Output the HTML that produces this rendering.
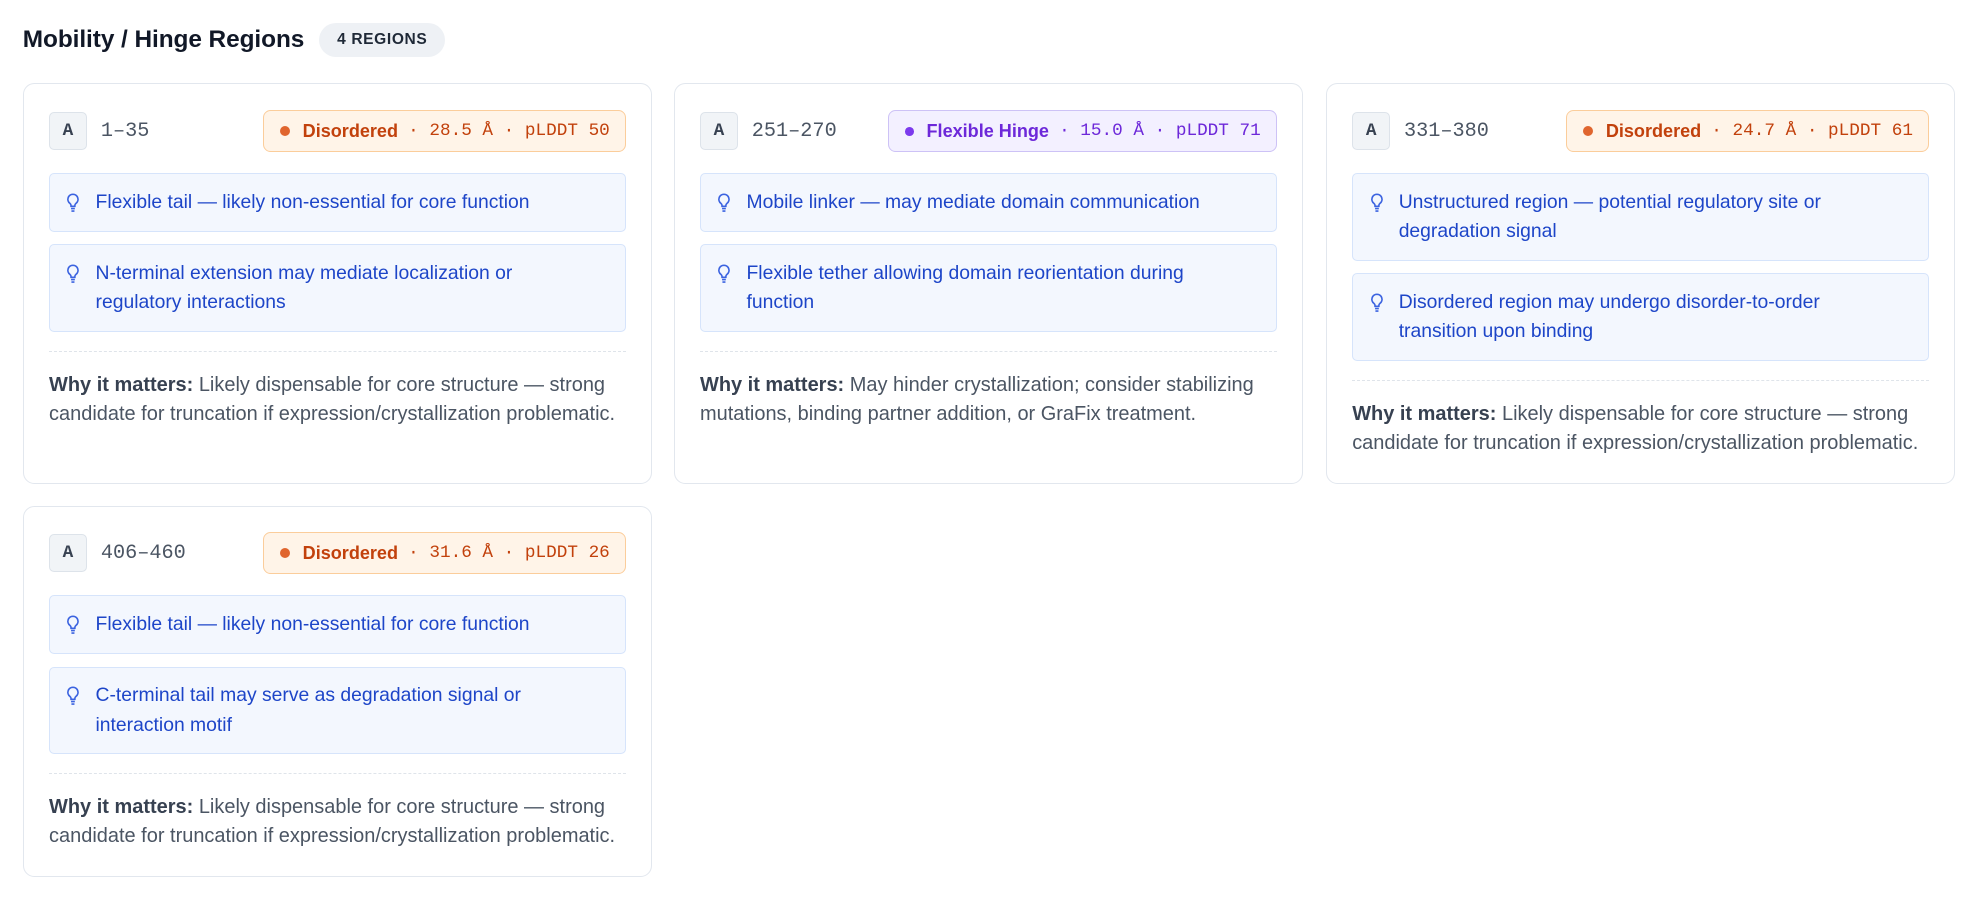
<!DOCTYPE html>
<html><head><meta charset="utf-8"><style>
html,body{margin:0;padding:0;background:#fff;}
body{width:1568px;height:714px;zoom:1.264;overflow:hidden;font-family:"Liberation Sans",sans-serif;}
.hdr{position:absolute;left:18px;top:18px;height:27px;display:flex;align-items:center;}
.hdr h1{margin:0;font-size:19.3px;font-weight:bold;color:#111827;letter-spacing:-0.05px;}
.cnt{margin-left:12px;background:#eef1f5;border-radius:14px;height:27px;line-height:27px;padding:0 14px;font-size:12.3px;font-weight:bold;color:#1f2937;letter-spacing:0.5px;}
.card{position:absolute;width:498px;border:1px solid #e2e7ee;border-radius:9px;background:#fff;box-sizing:border-box;padding:20px 20px 0 20px;}
.top{display:flex;align-items:center;height:34px;margin-bottom:16px;}
.chip{width:30px;height:30px;box-sizing:border-box;border:1px solid #dde3ea;background:#f1f4f7;border-radius:4px;font-family:"Liberation Mono",monospace;font-weight:bold;font-size:14px;color:#374151;display:flex;align-items:center;justify-content:center;}
.rng{margin-left:11px;font-family:"Liberation Mono",monospace;font-size:16px;color:#4b5563;}
.badge{margin-left:auto;height:33px;box-sizing:border-box;border-radius:6px;display:flex;align-items:center;padding:0 12px 0 13px;font-size:14.3px;}
.badge b{font-weight:bold;}
.badge .m{font-family:"Liberation Mono",monospace;font-size:14px;margin-left:8px;white-space:pre;}
.dot{width:8px;height:8px;border-radius:50%;margin-right:10px;}
.or{background:#fff4e8;border:1px solid #fbcd9b;color:#c2410c;}
.or .dot{background:#e0652e;}
.pu{background:#f3f0ff;border:1px solid #cdc2f6;color:#6d28d9;}
.pu .dot{background:#7c3aed;width:7px;height:7px;}
.hint{border:1px solid #d6e4fb;background:#f3f7fe;border-radius:4px;padding:11px 30px 11px 36px;position:relative;font-size:15.3px;line-height:23px;color:#1d45c8;margin-bottom:10px;}
.hint svg{position:absolute;left:13px;top:15px;}
.dash{border-top:1px dashed #dfe4ea;margin-top:15px;}
.why{padding-top:15px;font-size:15.8px;line-height:23px;color:#4b5563;}
.why b{color:#374151;}
</style></head><body>
<div class="hdr"><h1>Mobility / Hinge Regions</h1><span class="cnt">4 REGIONS</span></div>

<div class="card" style="left:18px;top:66px;height:317px;">
<div class="top"><div class="chip">A</div><div class="rng">1–35</div><div class="badge or"><span class="dot"></span><b>Disordered</b><span class="m">· 28.5 Å · pLDDT 50</span></div></div>
<div class="hint"><svg width="11" height="16" viewBox="0 0 11 16" fill="none" stroke="#3b63e0" stroke-width="1.3"><path d="M5.5 1a4 4 0 0 0-2.4 7.2c.6.5.9 1.1.9 1.8v.5h3v-.5c0-.7.3-1.3.9-1.8A4 4 0 0 0 5.5 1z"/><path d="M4 12.3h3M4.3 14.3h2.4"/></svg>Flexible tail — likely non-essential for core function</div>
<div class="hint"><svg width="11" height="16" viewBox="0 0 11 16" fill="none" stroke="#3b63e0" stroke-width="1.3"><path d="M5.5 1a4 4 0 0 0-2.4 7.2c.6.5.9 1.1.9 1.8v.5h3v-.5c0-.7.3-1.3.9-1.8A4 4 0 0 0 5.5 1z"/><path d="M4 12.3h3M4.3 14.3h2.4"/></svg>N-terminal extension may mediate localization or regulatory interactions</div>
<div class="dash"></div>
<div class="why"><b>Why it matters:</b> Likely dispensable for core structure — strong candidate for truncation if expression/crystallization problematic.</div>
</div>

<div class="card" style="left:533px;top:66px;height:317px;">
<div class="top"><div class="chip">A</div><div class="rng">251–270</div><div class="badge pu"><span class="dot"></span><b>Flexible Hinge</b><span class="m">· 15.0 Å · pLDDT 71</span></div></div>
<div class="hint"><svg width="11" height="16" viewBox="0 0 11 16" fill="none" stroke="#3b63e0" stroke-width="1.3"><path d="M5.5 1a4 4 0 0 0-2.4 7.2c.6.5.9 1.1.9 1.8v.5h3v-.5c0-.7.3-1.3.9-1.8A4 4 0 0 0 5.5 1z"/><path d="M4 12.3h3M4.3 14.3h2.4"/></svg>Mobile linker — may mediate domain communication</div>
<div class="hint"><svg width="11" height="16" viewBox="0 0 11 16" fill="none" stroke="#3b63e0" stroke-width="1.3"><path d="M5.5 1a4 4 0 0 0-2.4 7.2c.6.5.9 1.1.9 1.8v.5h3v-.5c0-.7.3-1.3.9-1.8A4 4 0 0 0 5.5 1z"/><path d="M4 12.3h3M4.3 14.3h2.4"/></svg>Flexible tether allowing domain reorientation during function</div>
<div class="dash"></div>
<div class="why"><b>Why it matters:</b> May hinder crystallization; consider stabilizing mutations, binding partner addition, or GraFix treatment.</div>
</div>

<div class="card" style="left:1049px;top:66px;height:317px;">
<div class="top"><div class="chip">A</div><div class="rng">331–380</div><div class="badge or"><span class="dot"></span><b>Disordered</b><span class="m">· 24.7 Å · pLDDT 61</span></div></div>
<div class="hint"><svg width="11" height="16" viewBox="0 0 11 16" fill="none" stroke="#3b63e0" stroke-width="1.3"><path d="M5.5 1a4 4 0 0 0-2.4 7.2c.6.5.9 1.1.9 1.8v.5h3v-.5c0-.7.3-1.3.9-1.8A4 4 0 0 0 5.5 1z"/><path d="M4 12.3h3M4.3 14.3h2.4"/></svg>Unstructured region — potential regulatory site or degradation signal</div>
<div class="hint"><svg width="11" height="16" viewBox="0 0 11 16" fill="none" stroke="#3b63e0" stroke-width="1.3"><path d="M5.5 1a4 4 0 0 0-2.4 7.2c.6.5.9 1.1.9 1.8v.5h3v-.5c0-.7.3-1.3.9-1.8A4 4 0 0 0 5.5 1z"/><path d="M4 12.3h3M4.3 14.3h2.4"/></svg>Disordered region may undergo disorder-to-order transition upon binding</div>
<div class="dash"></div>
<div class="why"><b>Why it matters:</b> Likely dispensable for core structure — strong candidate for truncation if expression/crystallization problematic.</div>
</div>

<div class="card" style="left:18px;top:400px;height:294px;">
<div class="top"><div class="chip">A</div><div class="rng">406–460</div><div class="badge or"><span class="dot"></span><b>Disordered</b><span class="m">· 31.6 Å · pLDDT 26</span></div></div>
<div class="hint"><svg width="11" height="16" viewBox="0 0 11 16" fill="none" stroke="#3b63e0" stroke-width="1.3"><path d="M5.5 1a4 4 0 0 0-2.4 7.2c.6.5.9 1.1.9 1.8v.5h3v-.5c0-.7.3-1.3.9-1.8A4 4 0 0 0 5.5 1z"/><path d="M4 12.3h3M4.3 14.3h2.4"/></svg>Flexible tail — likely non-essential for core function</div>
<div class="hint"><svg width="11" height="16" viewBox="0 0 11 16" fill="none" stroke="#3b63e0" stroke-width="1.3"><path d="M5.5 1a4 4 0 0 0-2.4 7.2c.6.5.9 1.1.9 1.8v.5h3v-.5c0-.7.3-1.3.9-1.8A4 4 0 0 0 5.5 1z"/><path d="M4 12.3h3M4.3 14.3h2.4"/></svg>C-terminal tail may serve as degradation signal or interaction motif</div>
<div class="dash"></div>
<div class="why"><b>Why it matters:</b> Likely dispensable for core structure — strong candidate for truncation if expression/crystallization problematic.</div>
</div>
</body></html>
